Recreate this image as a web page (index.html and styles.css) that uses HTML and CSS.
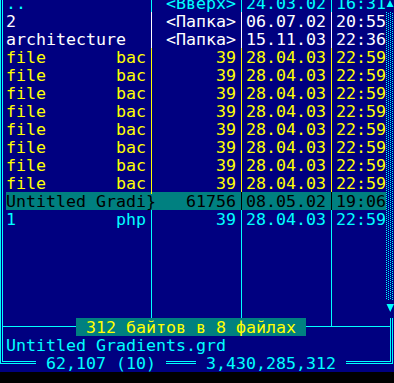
FILE: index.html
```html
<!DOCTYPE html>
<html lang="ru">
<head>
<meta charset="utf-8">
<title>Панель</title>
<link rel="stylesheet" href="styles.css">
</head>
<body>
<div class="screen">
  <div class="frame">
    <div class="files">
      <div class="list">
        <div class="row cyan"><span class="name"><span>..</span></span><span class="sep"></span><span class="size">&lt;Вверх&gt;</span><span class="sep"></span><span class="date">24.03.02</span><span class="sep"></span><span class="time">16:31</span></div>
        <div class="row white"><span class="name"><span>2</span></span><span class="sep"></span><span class="size">&lt;Папка&gt;</span><span class="sep"></span><span class="date">06.07.02</span><span class="sep"></span><span class="time">20:55</span></div>
        <div class="row white"><span class="name"><span>architecture</span></span><span class="sep"></span><span class="size">&lt;Папка&gt;</span><span class="sep"></span><span class="date">15.11.03</span><span class="sep"></span><span class="time">22:36</span></div>
        <div class="row yellow"><span class="name"><span>file</span><span>bac</span></span><span class="sep"></span><span class="size">39</span><span class="sep"></span><span class="date">28.04.03</span><span class="sep"></span><span class="time">22:59</span></div>
        <div class="row yellow"><span class="name"><span>file</span><span>bac</span></span><span class="sep"></span><span class="size">39</span><span class="sep"></span><span class="date">28.04.03</span><span class="sep"></span><span class="time">22:59</span></div>
        <div class="row yellow"><span class="name"><span>file</span><span>bac</span></span><span class="sep"></span><span class="size">39</span><span class="sep"></span><span class="date">28.04.03</span><span class="sep"></span><span class="time">22:59</span></div>
        <div class="row yellow"><span class="name"><span>file</span><span>bac</span></span><span class="sep"></span><span class="size">39</span><span class="sep"></span><span class="date">28.04.03</span><span class="sep"></span><span class="time">22:59</span></div>
        <div class="row yellow"><span class="name"><span>file</span><span>bac</span></span><span class="sep"></span><span class="size">39</span><span class="sep"></span><span class="date">28.04.03</span><span class="sep"></span><span class="time">22:59</span></div>
        <div class="row yellow"><span class="name"><span>file</span><span>bac</span></span><span class="sep"></span><span class="size">39</span><span class="sep"></span><span class="date">28.04.03</span><span class="sep"></span><span class="time">22:59</span></div>
        <div class="row yellow"><span class="name"><span>file</span><span>bac</span></span><span class="sep"></span><span class="size">39</span><span class="sep"></span><span class="date">28.04.03</span><span class="sep"></span><span class="time">22:59</span></div>
        <div class="row yellow"><span class="name"><span>file</span><span>bac</span></span><span class="sep"></span><span class="size">39</span><span class="sep"></span><span class="date">28.04.03</span><span class="sep"></span><span class="time">22:59</span></div>
        <div class="row sel"><span class="name"><span>Untitled Gradi</span></span><span class="sep brace">}</span><span class="size">61756</span><span class="sep"></span><span class="date">08.05.02</span><span class="sep"></span><span class="time">19:06</span></div>
        <div class="row cyan"><span class="name"><span>1</span><span>php</span></span><span class="sep"></span><span class="size">39</span><span class="sep"></span><span class="date">28.04.03</span><span class="sep"></span><span class="time">22:59</span></div>
      </div>
      <div class="scroll">
        <svg class="arrow" width="10" height="18" viewBox="0 0 10 18"><polygon points="0.5,13 7.5,13 4,6" fill="#00ffff"/></svg>
        <div class="track"></div>
        <svg class="arrow" width="10" height="18" viewBox="0 0 10 18"><polygon points="0.5,4 8,4 4.25,12" fill="#00ffff"/></svg>
      </div>
    </div>
    <div class="divider">
      <div class="stubs"></div>
      <div class="status">312 байтов в 8 файлах</div>
    </div>
    <div class="info">Untitled Gradients.grd</div>
    <div class="totals"><span class="tot">62,107 (10)</span><span class="tot">3,430,285,312</span></div>
  </div>
</div>
</body>
</html>
```

FILE: styles.css
```css
html, body {
  margin: 0;
  padding: 0;
  background: #000000;
  overflow: hidden;
}

.screen {
  width: 394px;
  height: 372px;
  overflow: hidden;
  background: #000080;
  color: #00ffff;
  font-family: "DejaVu Sans Mono", monospace;
  font-size: 16.61px;
}

.frame {
  margin-top: -6px;
  width: 393px;
  height: 370px;
  box-sizing: border-box;
  border: 3px double #00ffff;
  border-top: 0;
}

.files {
  display: flex;
  height: 324px;
  margin-right: -6px;
}

.list {
  flex: none;
  width: 383px;
  box-sizing: border-box;
  padding-left: 3px;
  background:
    linear-gradient(#00ffff, #00ffff) 148px 0 / 1px 100% no-repeat,
    linear-gradient(#00ffff, #00ffff) 238px 0 / 1px 100% no-repeat,
    linear-gradient(#00ffff, #00ffff) 328px 0 / 1px 100% no-repeat,
    #000080;
}

.row {
  display: grid;
  grid-template-columns: 140px 10px 80px 10px 80px 10px 50px;
  height: 18px;
  line-height: 20px;
  white-space: pre;
  background: #000080;
}

.row.cyan { color: #00ffff; }
.row.white { color: #ffffff; }
.row.yellow { color: #ffff00; }
.row.sel { background: #008080; color: #000000; }

.name {
  display: flex;
  justify-content: space-between;
  overflow: hidden;
}

.sep {
  background: linear-gradient(currentColor, currentColor) 5px 0 / 1px 100% no-repeat;
}

.sep.brace {
  background: none;
}

.size {
  text-align: right;
}

.scroll {
  flex: none;
  width: 10px;
  display: flex;
  flex-direction: column;
  background: #000080;
}

.arrow {
  display: block;
  flex: none;
}

.track {
  height: 288px;
  background:
    conic-gradient(at 1px 1px, transparent 75%, #00ffff 0) 0 0 / 4px 2px,
    conic-gradient(at 1px 1px, transparent 75%, #00ffff 0) 2px 1px / 4px 2px;
}

.divider {
  display: grid;
  height: 18px;
}

.divider > * {
  grid-area: 1 / 1;
}

.stubs {
  height: 9px;
  box-sizing: border-box;
  border-bottom: 1px solid #00ffff;
  background:
    linear-gradient(#00ffff, #00ffff) 148px 0 / 1px 100% no-repeat,
    linear-gradient(#00ffff, #00ffff) 238px 0 / 1px 100% no-repeat,
    linear-gradient(#00ffff, #00ffff) 328px 0 / 1px 100% no-repeat;
}

.status {
  justify-self: start;
  align-self: start;
  margin-left: 73px;
  padding: 0 10px;
  height: 18px;
  line-height: 20px;
  white-space: pre;
  background: #008080;
  color: #ffff00;
}

.info {
  height: 18px;
  line-height: 20px;
  padding-left: 3px;
  white-space: pre;
}

.totals {
  display: flex;
  gap: 30px;
  height: 18px;
  line-height: 20px;
  padding-left: 33px;
}

.tot {
  padding: 0 10px;
  white-space: pre;
  background: #000080;
}
```
